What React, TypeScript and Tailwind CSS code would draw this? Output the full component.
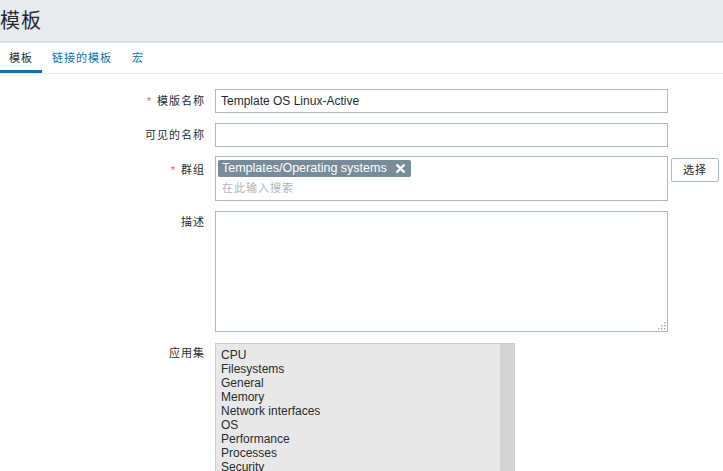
const APPLICATIONS = [
  "CPU",
  "Filesystems",
  "General",
  "Memory",
  "Network interfaces",
  "OS",
  "Performance",
  "Processes",
  "Security",
  "Zabbix agent",
];

const FONT = { fontFamily: '"Liberation Sans", "Noto Sans CJK SC", sans-serif' };

function Label({ text, required, offset = "pt-[5px]" }: { text: string; required?: boolean; offset?: string }) {
  return (
    <div className={`flex justify-end ${offset} text-[11px] leading-[14px] tracking-[1px] text-[#1f2c33]`}>
      {required && <span className="mr-[5px] text-[#e45959]">*</span>}
      <span>{text}</span>
    </div>
  );
}

function ResizeDots() {
  const dots = [
    [8, 0],
    [8, 3],
    [5, 3],
    [8, 6],
    [5, 6],
    [2, 6],
  ];
  return (
    <svg className="absolute bottom-[1px] right-[1px]" width="10" height="8" viewBox="0 0 10 8">
      {dots.map(([x, y]) => (
        <rect key={`${x}-${y}`} x={x} y={y} width="1.5" height="1.5" fill="#a9b1b5" />
      ))}
    </svg>
  );
}

export default function App() {
  return (
    <div className="min-h-[471px] bg-white text-[#1f2c33]" style={FONT}>
      <header className="flex h-[43px] items-center border-b-2 border-[#dde0e3] bg-[#e8ebee]">
        <h1 className="text-[20px] leading-none tracking-[1px] text-[#1f2c33]">模板</h1>
      </header>

      <nav className="flex h-[31px] border-b border-[#ebeef0] text-[11px] tracking-[1px]">
        <div className="flex items-center border-b-[3px] border-[#0275b8] px-[9px] pt-[3px] text-[#1f2c33]">
          模板
        </div>
        <div className="flex items-center px-[10px] text-[#0275b8]">链接的模板</div>
        <div className="flex items-center px-[10px] text-[#0275b8]">宏</div>
      </nav>

      <form className="grid grid-cols-[205px_453px_auto] gap-x-[10px] gap-y-[10px] pt-[15px]">
        <Label text="模版名称" required />
        <div className="flex h-[24px] items-center border border-[#acbbc2] px-[5px] text-[12px]">
          Template OS Linux-Active
        </div>
        <div />

        <Label text="可见的名称" />
        <div className="h-[24px] border border-[#acbbc2]" />
        <div />

        <Label text="群组" required offset="pt-[6px]" />
        <div className="-mt-[1px] flex h-[45px] flex-col items-start border border-[#acbbc2] px-[2px] pt-[3px]">
          <span className="flex h-[17px] items-center gap-[8px] rounded-[2px] bg-[#768d99] pl-[4px] pr-[5px] text-[12.5px] leading-none text-white">
            Templates/Operating systems
            <svg width="11" height="11" viewBox="0 0 11 11">
              <path d="M1.5 1.5 L9.5 9.5 M9.5 1.5 L1.5 9.5" stroke="white" strokeWidth="2.4" />
            </svg>
          </span>
          <div className="mt-[4px] pl-[4px] text-[11px] leading-[14px] tracking-[1px] text-[#acb6bb]">在此输入搜索</div>
        </div>
        <div className="-ml-[7px]">
          <button
            type="button"
            className="h-[24px] w-[48px] rounded-[2px] border border-[#acbbc2] bg-white text-[11px] tracking-[1px] text-[#1f2c33]"
          >
            选择
          </button>
        </div>

        <Label text="描述" offset="pt-[4px]" />
        <div className="relative h-[121px] border border-[#acbbc2]">
          <ResizeDots />
        </div>
        <div />

        <Label text="应用集" offset="pt-[4px]" />
        <div className="mt-[1px] flex h-[140px] w-[300px] overflow-hidden border border-[#c5ced3] bg-[#e8e8e8]">
          <ul className="flex-1 px-[5px] pt-[4px] text-[12px] leading-[14px] text-[#1f2c33]">
            {APPLICATIONS.map((app) => (
              <li key={app}>{app}</li>
            ))}
          </ul>
          <div className="w-[14px] bg-[#d4d4d4]" />
        </div>
        <div />
      </form>
    </div>
  );
}
